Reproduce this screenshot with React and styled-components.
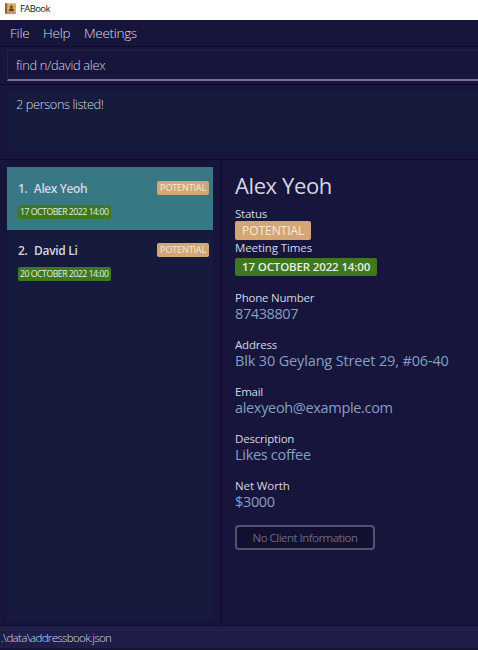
import React from "react";
import styled, { createGlobalStyle } from "styled-components";

const Global = createGlobalStyle`
  * { box-sizing: border-box; }
  html, body { margin: 0; padding: 0; overflow: hidden; background: #17153b; }
  body { font-family: "Open Sans", "Noto Sans", sans-serif; color: #d6d6e2; }
`;

const Window = styled.div`
  display: flex;
  flex-direction: column;
  width: 478px;
  height: 650px;
  overflow: hidden;
  white-space: nowrap;
  background: #17153b;
`;

const TitleBar = styled.header`
  display: flex;
  align-items: center;
  height: 20px;
  padding: 0 0 3px 5px;
  gap: 4px;
  background: #fff;
  color: #222;
  font-size: 9.5px;
  letter-spacing: -0.6px;
  svg { display: block; }
`;

const MenuBar = styled.nav`
  display: flex;
  align-items: center;
  height: 27px;
  padding-left: 10px;
  gap: 13.5px;
  border-bottom: 1px solid #0c0a2c;
  font-size: 13.5px;
  font-weight: 300;
  color: #dcdce8;
`;

const MenuItem = styled.span`
  letter-spacing: ${(p) => p.$track}px;
`;

const CommandArea = styled.section`
  height: 38px;
  padding: 3px 0 0 7px;
  border-bottom: 1px solid #0c0a2c;
`;

const CommandBox = styled.div`
  height: 31px;
  padding: 0 0 0 8px;
  border: 1px solid #242340;
  border-right: 0;
  border-bottom: 2px solid #74738f;
  font-size: 12.8px;
  line-height: 29px;
  font-weight: 300;
  letter-spacing: -0.3px;
`;

const ResultArea = styled.section`
  height: 75px;
  padding: 5px 0 6px 7px;
  border-bottom: 1px solid #0c0a2c;
`;

const ResultBox = styled.div`
  height: 63px;
  padding: 4px 8px;
  background: #161a3d;
  border: 1px solid #13133a;
  border-right: 0;
  font-size: 12.8px;
  line-height: 18px;
  font-weight: 300;
  letter-spacing: -0.4px;
`;

const Main = styled.main`
  display: flex;
  height: 465px;
`;

const ListPane = styled.aside`
  width: 222px;
  padding: 7px 8px 6px 7px;
  border-right: 1px solid #0e0c30;
`;

const List = styled.div`
  width: 206px;
  height: 452px;
  background: #161a3d;
`;

const Card = styled.article`
  height: 63px;
  padding: ${(p) => (p.$selected ? 12 : 11)}px 4px 0 11px;
  background: ${(p) => (p.$selected ? "#387784" : "transparent")};
`;

const CardHead = styled.div`
  display: flex;
  align-items: flex-start;
  justify-content: space-between;
  height: 19px;
  padding-top: 2px;
`;

const Name = styled.div`
  display: flex;
  gap: 6.5px;
  margin-top: -1px;
  font-size: 12px;
  font-weight: 600;
  line-height: 18px;
  letter-spacing: ${(p) => p.$track}px;
`;

const Tag = styled.span`
  display: block;
  width: fit-content;
  height: 14px;
  padding: 0 3px;
  border-radius: 2px;
  background: ${(p) => (p.$kind === "status" ? "#d3a773" : "#3e7821")};
  color: ${(p) => (p.$kind === "status" ? "#f6eadb" : "#e6eee2")};
  font-size: ${(p) => (p.$kind === "status" ? 9.1 : 8.7)}px;
  line-height: 14px;
  letter-spacing: ${(p) => p.$track}px;
`;

const CardTime = styled.div`
  margin-top: 7px;
  ${Tag} { padding-left: 2px; font-weight: 500; }
`;

const Detail = styled.section`
  flex: 1;
  padding: 8px 0 0 13px;
`;

const Title = styled.h1`
  margin: 0 0 4px;
  font-size: 22px;
  line-height: 34px;
  font-weight: 400;
  letter-spacing: ${(p) => p.$track}px;
`;

const Label = styled.div`
  height: 15px;
  font-size: 11.5px;
  line-height: 15px;
  letter-spacing: ${(p) => p.$track}px;
`;

const Value = styled.div`
  height: 17px;
  font-size: 14.5px;
  line-height: 17px;
  color: #839fc4;
  letter-spacing: ${(p) => p.$track}px;
`;

const Field = styled.div`
  height: 32px;
  margin-bottom: 15px;
`;

const BigTag = styled(Tag)`
  height: ${(p) => (p.$kind === "status" ? 19 : 18)}px;
  margin: ${(p) => (p.$kind === "status" ? "0" : "3px 0 14px")};
  padding: 0 7px;
  font-size: ${(p) => (p.$kind === "status" ? 12 : 11.5)}px;
  line-height: ${(p) => (p.$kind === "status" ? 19 : 18)}px;
  font-weight: ${(p) => (p.$kind === "status" ? 400 : 600)};
`;

const ClientButton = styled.button`
  display: block;
  width: 140px;
  height: 25px;
  padding: 0;
  margin-top: 0;
  border: 2px solid #535271;
  border-radius: 4px;
  background: #121031;
  color: #6b6983;
  font: 400 11.5px/20px "Open Sans", sans-serif;
  letter-spacing: -0.53px;
`;

const StatusBar = styled.footer`
  height: 24px;
  padding-left: 1px;
  border-top: 1px solid #0f0d31;
  border-bottom: 1px solid #14112a;
  background: #1f1e4b;
  font-size: 11.5px;
  line-height: 23px;
  font-weight: 300;
  letter-spacing: -0.64px;
`;

function BookIcon() {
  return (
    <svg width="11" height="11" viewBox="0 0 11 11">
      <rect x="0" y="0.3" width="11" height="10.4" rx="0.8" fill="#d7ad62" />
      <rect x="0" y="0.3" width="2.2" height="10.4" rx="0.6" fill="#83694a" />
      <rect x="2.2" y="9.6" width="8.6" height="1" fill="#a98045" />
      <circle cx="6.4" cy="3.8" r="1.4" fill="#5c4220" />
      <path d="M3.8 8.2q0-3 2.6-3t2.6 3z" fill="#5c4220" />
    </svg>
  );
}

const people = [
  { name: "Alex Yeoh", time: "17 OCTOBER 2022 14:00", track: -0.4, selected: true },
  { name: "David Li", time: "20 OCTOBER 2022 14:00", track: -0.3 },
];

const fields = [
  { label: "Phone Number", value: "87438807", lt: -0.22, vt: -0.4 },
  { label: "Address", value: "Blk 30 Geylang Street 29, #06-40", lt: -0.2, vt: -0.15 },
  { label: "Email", value: "alexyeoh@example.com", lt: -0.25, vt: -0.33 },
  { label: "Description", value: "Likes coffee", lt: -0.2, vt: -0.3 },
  { label: "Net Worth", value: "$3000", lt: -0.1, vt: -0.35 },
];

export default function App() {
  return (
    <Window>
      <Global />
      <TitleBar>
        <BookIcon />
        <span>FABook</span>
      </TitleBar>
      <MenuBar>
        <MenuItem $track={-0.2}>File</MenuItem>
        <MenuItem $track={-0.2}>Help</MenuItem>
        <MenuItem $track={-0.3}>Meetings</MenuItem>
      </MenuBar>
      <CommandArea>
        <CommandBox>find n/david alex</CommandBox>
      </CommandArea>
      <ResultArea>
        <ResultBox>2 persons listed!</ResultBox>
      </ResultArea>
      <Main>
        <ListPane>
          <List>
            {people.map((p, i) => (
              <Card key={p.name} $selected={p.selected}>
                <CardHead>
                  <Name $track={p.track}>
                    <span>{i + 1}.</span>
                    <span>{p.name}</span>
                  </Name>
                  <Tag $kind="status" $track={-0.18}>POTENTIAL</Tag>
                </CardHead>
                <CardTime>
                  <Tag $kind="time" $track={-0.47}>{p.time}</Tag>
                </CardTime>
              </Card>
            ))}
          </List>
        </ListPane>
        <Detail>
          <Title $track={-0.4}>Alex Yeoh</Title>
          <Label $track={-0.25}>Status</Label>
          <BigTag $kind="status" $track={-0.05}>POTENTIAL</BigTag>
          <Label $track={-0.1}>Meeting Times</Label>
          <BigTag $kind="time" $track={-0.14}>17 OCTOBER 2022 14:00</BigTag>
          {fields.map((f) => (
            <Field key={f.label}>
              <Label $track={f.lt}>{f.label}</Label>
              <Value $track={f.vt}>{f.value}</Value>
            </Field>
          ))}
          <ClientButton>No Client Information</ClientButton>
        </Detail>
      </Main>
      <StatusBar>.\data\addressbook.json</StatusBar>
    </Window>
  );
}
